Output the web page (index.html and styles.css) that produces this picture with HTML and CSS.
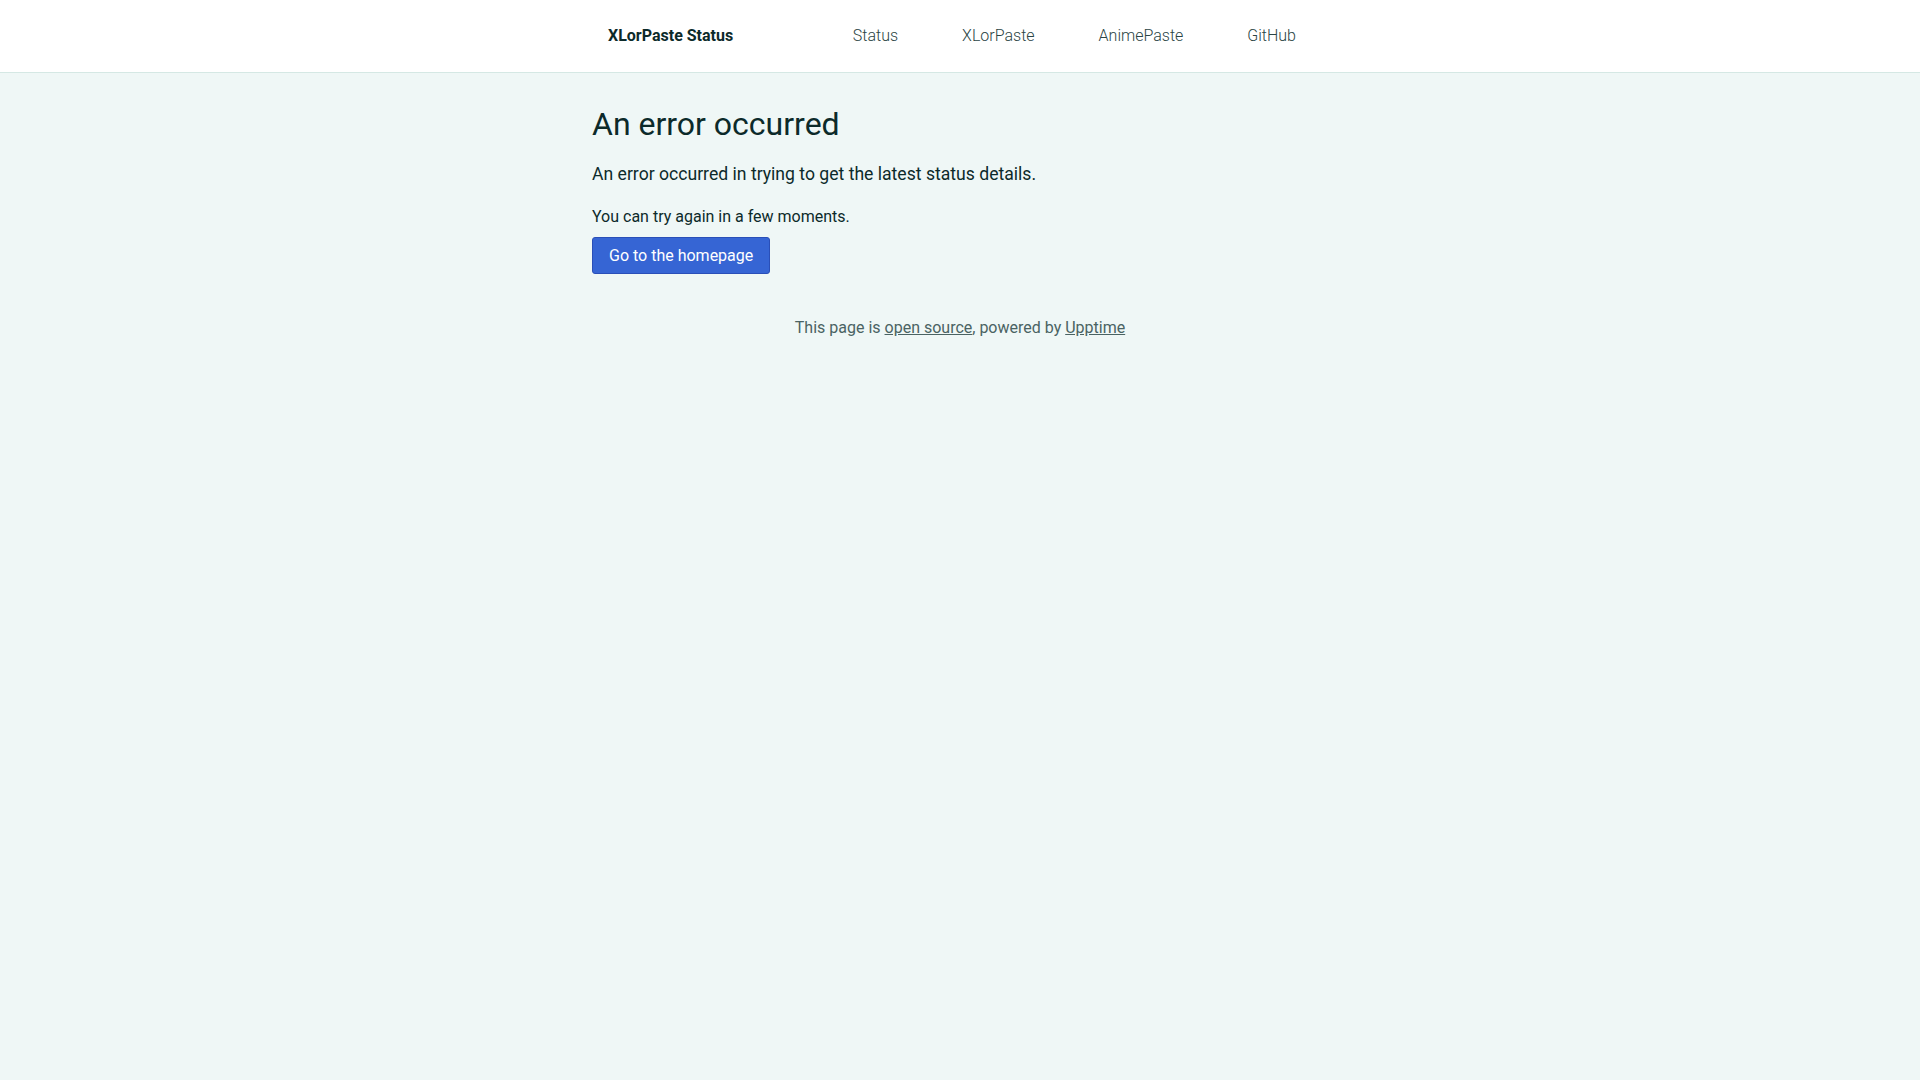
FILE: index.html
```html
<!DOCTYPE html>
<html>
<head>
  <title>XLorPaste Status</title>
  <meta name="viewport" content="width=device-width">
  <link rel="stylesheet" href="styles.css">
</head>
<body>
  <header class="navbar">
    <div class="container navbar-inner">
      <a class="brand" href="#">XLorPaste Status</a>
      <nav class="nav">
        <a href="#">Status</a>
        <a href="#">XLorPaste</a>
        <a href="#">AnimePaste</a>
        <a href="#">GitHub</a>
      </nav>
    </div>
  </header>
  <main class="container content">
    <h1>An error occurred</h1>
    <p class="lead">An error occurred in trying to get the latest status details.</p>
    <p>You can try again in a few moments.</p>
    <a class="button" href="#">Go to the homepage</a>
  </main>
  <footer class="container footer">
    <p>This page is <a href="#">open source</a>, powered by <a href="#">Upptime</a></p>
  </footer>
</body>
</html>
```

FILE: styles.css
```css
body {
  margin: 0;
  background-color: #eff7f6;
  color: #0c2a2a;
  font-family: Roboto, "Liberation Sans", sans-serif;
  font-size: 16px;
  line-height: 1.5;
}
a {
  color: inherit;
}
.container {
  width: 736px;
  margin: 0 auto;
}
.navbar {
  background-color: #fff;
  border-bottom: 1px solid #d5e8e4;
}
.navbar-inner {
  display: flex;
  align-items: center;
  justify-content: space-between;
  height: 72px;
}
.brand {
  padding: 0 16px;
  font-weight: bold;
  text-decoration: none;
  color: #0c2a2a;
}
.nav {
  display: flex;
}
.nav a {
  padding: 0 32px;
  font-weight: 300;
  color: #2a4444;
  text-decoration: none;
}
.content {
  display: flex;
  flex-direction: column;
  align-items: flex-start;
  padding-top: 32px;
}
h1 {
  margin: 0 0 18px;
  font-size: 32px;
  font-weight: normal;
  line-height: 1.2;
}
.content p {
  margin: 0 0 8px;
}
.content .lead {
  font-size: 17.6px;
  margin-bottom: 17.6px;
}
.button {
  padding: 5px 16px;
  line-height: 25px;
  background-color: #3665d4;
  border: 1px solid #2a4fb8;
  border-radius: 3px;
  color: #fff;
  text-decoration: none;
}
.footer {
  padding-top: 42px;
  text-align: center;
  color: #4a6363;
}
.footer p {
  margin: 0;
}
```
